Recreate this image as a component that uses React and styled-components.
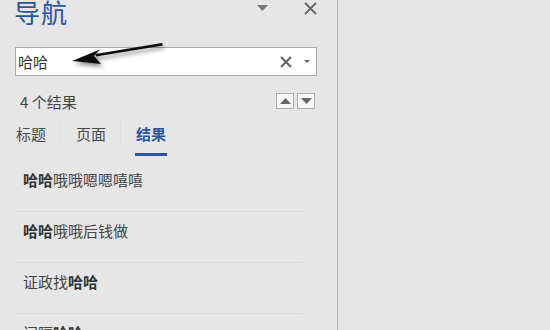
import React from "react";
import styled, { createGlobalStyle } from "styled-components";

const Global = createGlobalStyle`
  html, body { margin: 0; padding: 0; background: #e6e6e6; }
  body { font-family: "Noto Sans CJK SC", "Noto Sans", sans-serif; overflow: hidden; }
`;

const Page = styled.div`
  display: flex;
  width: 550px;
  height: 330px;
  overflow: hidden;
  background: #e6e6e6;
`;

const Panel = styled.div`
  position: relative;
  width: 337px;
  flex: none;
  border-right: 1px solid #b9b9b9;
  display: flex;
  flex-direction: column;
  & > * { flex-shrink: 0; }
`;

const Header = styled.div`
  display: flex;
  align-items: flex-start;
  height: 47px;
  padding: 0 20px 0 14px;
  box-sizing: border-box;
`;

const Title = styled.div`
  font-size: 26px;
  line-height: 26px;
  margin-top: -1px;
  color: #2b579a;
  letter-spacing: 1px;
  flex: 1;
`;

const HeaderIcons = styled.div`
  display: flex;
  align-items: center;
  gap: 36px;
  height: 18px;
`;

const IconSvg = styled.svg`
  display: block;
`;

const Search = styled.div`
  margin: 0 20px 0 15px;
  height: 29px;
  box-sizing: border-box;
  border: 1px solid #ababab;
  background: #fff;
  display: flex;
  align-items: center;
  padding: 0 6px 0 2px;
`;

const SearchText = styled.div`
  flex: 1;
  font-size: 15px;
  color: #333;
  line-height: 20px;
`;

const SearchTools = styled.div`
  display: flex;
  align-items: center;
  gap: 12px;
`;

const CountRow = styled.div`
  display: flex;
  align-items: center;
  height: 16px;
  margin-top: 17px;
  padding: 0 22px 0 20px;
`;

const CountText = styled.div`
  flex: 1;
  font-size: 15px;
  color: #444;
`;

const NavButtons = styled.div`
  display: flex;
  gap: 3px;
`;

const NavButton = styled.div`
  width: 18px;
  height: 16px;
  box-sizing: border-box;
  border: 1px solid #ababab;
  background: #f7f7f7;
  display: flex;
  align-items: center;
  justify-content: center;
`;

const Tabs = styled.div`
  display: flex;
  align-items: stretch;
  margin-top: 12px;
  padding-left: 16px;
  height: 36px;
`;

const Tab = styled.div`
  position: relative;
  font-size: 15px;
  line-height: 26px;
  color: ${(p) => (p.$active ? "#2b579a" : "#4a4a4a")};
  font-weight: ${(p) => (p.$active ? 700 : 400)};
  padding-right: 14px;
  margin-right: 15px;
  border-right: ${(p) => (p.$last ? "none" : "1px solid #dedede")};
  height: 26px;
  &::after {
    content: "";
    display: ${(p) => (p.$active ? "block" : "none")};
    position: absolute;
    left: -1px;
    right: 13px;
    bottom: -9px;
    height: 3px;
    background: #2b579a;
  }
`;

const List = styled.div`
  display: flex;
  flex-direction: column;
  margin-top: 4px;
`;

const Row = styled.div`
  height: 51px;
  flex: none;
  box-sizing: border-box;
  margin: 0 35px 0 15px;
  padding: 9px 0 0 8px;
  border-bottom: 1px solid #d9d9d9;
  font-size: 15px;
  line-height: 20px;
  color: #444;
  b { color: #333; font-weight: 700; }
`;

const Arrow = styled.svg`
  position: absolute;
  left: 60px;
  top: 36px;
  overflow: visible;
`;

const rows = [
  ["哈哈", "哦哦嗯嗯嘻嘻", true],
  ["哈哈", "哦哦后钱做", true],
  ["证政找", "哈哈", false],
  ["间隔", "哈哈", false],
];

export default function App() {
  return (
    <>
      <Global />
      <Page>
        <Panel>
          <Header>
            <Title>导航</Title>
            <HeaderIcons>
              <IconSvg width="11" height="18" viewBox="0 0 11 18">
                <polygon points="0,5 11,5 5.5,11" fill="#777" />
              </IconSvg>
              <IconSvg width="13" height="18" viewBox="0 0 13 18">
                <path d="M1 3 L12 14 M12 3 L1 14" stroke="#666" strokeWidth="1.8" />
              </IconSvg>
            </HeaderIcons>
          </Header>
          <Search>
            <SearchText>哈哈</SearchText>
            <SearchTools>
              <IconSvg width="12" height="12" viewBox="0 0 12 12">
                <path d="M1 1 L11 11 M11 1 L1 11" stroke="#666" strokeWidth="2.2" />
              </IconSvg>
              <IconSvg width="6" height="4" viewBox="0 0 6 4">
                <polygon points="0,0 6,0 3,3" fill="#666" />
              </IconSvg>
            </SearchTools>
          </Search>
          <CountRow>
            <CountText>4 个结果</CountText>
            <NavButtons>
              <NavButton>
                <IconSvg width="11" height="6" viewBox="0 0 11 6">
                  <polygon points="0,6 11,6 5.5,0" fill="#666" />
                </IconSvg>
              </NavButton>
              <NavButton>
                <IconSvg width="11" height="6" viewBox="0 0 11 6">
                  <polygon points="0,0 11,0 5.5,6" fill="#666" />
                </IconSvg>
              </NavButton>
            </NavButtons>
          </CountRow>
          <Tabs>
            <Tab>标题</Tab>
            <Tab>页面</Tab>
            <Tab $active $last>结果</Tab>
          </Tabs>
          <List>
            {rows.map(([a, b, boldFirst], i) => (
              <Row key={i}>
                {boldFirst ? (
                  <>
                    <b>{a}</b>
                    {b}
                  </>
                ) : (
                  <>
                    {a}
                    <b>{b}</b>
                  </>
                )}
              </Row>
            ))}
          </List>
          <Arrow width="110" height="34" viewBox="0 0 110 34">
            <defs>
              <filter id="sh" x="-20%" y="-50%" width="140%" height="200%">
                <feGaussianBlur in="SourceAlpha" stdDeviation="2" />
                <feOffset dx="2" dy="3" result="b" />
                <feComponentTransfer>
                  <feFuncA type="linear" slope="0.45" />
                </feComponentTransfer>
                <feMerge>
                  <feMergeNode />
                  <feMergeNode in="SourceGraphic" />
                </feMerge>
              </filter>
            </defs>
            <g filter="url(#sh)">
              <path d="M102 7 L103 9.5 L36 20.5 L35.5 18 Z" fill="#111" />
              <path d="M12 25 L40 13.5 L34 20 L41 28 Z" fill="#111" />
            </g>
          </Arrow>
        </Panel>
      </Page>
    </>
  );
}
